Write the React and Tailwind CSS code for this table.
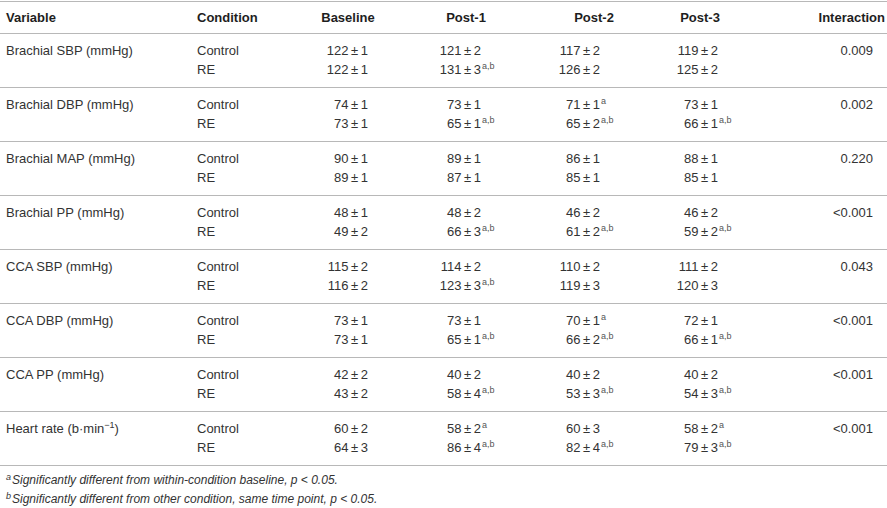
import React from 'react';

const rows = [
  {
    name: 'Brachial SBP (mmHg)',
    p: '0.009',
    control: [['122', '1'], ['121', '2'], ['117', '2'], ['119', '2']],
    re: [['122', '1'], ['131', '3', 'a,b'], ['126', '2'], ['125', '2']],
  },
  {
    name: 'Brachial DBP (mmHg)',
    p: '0.002',
    control: [['74', '1'], ['73', '1'], ['71', '1', 'a'], ['73', '1']],
    re: [['73', '1'], ['65', '1', 'a,b'], ['65', '2', 'a,b'], ['66', '1', 'a,b']],
  },
  {
    name: 'Brachial MAP (mmHg)',
    p: '0.220',
    control: [['90', '1'], ['89', '1'], ['86', '1'], ['88', '1']],
    re: [['89', '1'], ['87', '1'], ['85', '1'], ['85', '1']],
  },
  {
    name: 'Brachial PP (mmHg)',
    p: '<0.001',
    control: [['48', '1'], ['48', '2'], ['46', '2'], ['46', '2']],
    re: [['49', '2'], ['66', '3', 'a,b'], ['61', '2', 'a,b'], ['59', '2', 'a,b']],
  },
  {
    name: 'CCA SBP (mmHg)',
    p: '0.043',
    control: [['115', '2'], ['114', '2'], ['110', '2'], ['111', '2']],
    re: [['116', '2'], ['123', '3', 'a,b'], ['119', '3'], ['120', '3']],
  },
  {
    name: 'CCA DBP (mmHg)',
    p: '<0.001',
    control: [['73', '1'], ['73', '1'], ['70', '1', 'a'], ['72', '1']],
    re: [['73', '1'], ['65', '1', 'a,b'], ['66', '2', 'a,b'], ['66', '1', 'a,b']],
  },
  {
    name: 'CCA PP (mmHg)',
    p: '<0.001',
    control: [['42', '2'], ['40', '2'], ['40', '2'], ['40', '2']],
    re: [['43', '2'], ['58', '4', 'a,b'], ['53', '3', 'a,b'], ['54', '3', 'a,b']],
  },
  {
    name: 'heart',
    p: '<0.001',
    control: [['60', '2'], ['58', '2', 'a'], ['60', '3'], ['58', '2', 'a']],
    re: [['64', '3'], ['86', '4', 'a,b'], ['82', '4', 'a,b'], ['79', '3', 'a,b']],
  },
];

const grid = 'grid grid-cols-[191px_99px_116px_120px_136px_76px_1fr]';

// right edge of the value inside each time column
const valueBox = ['w-[78px]', 'w-[75px]', 'w-[74px]', 'w-[56px]'];

const Value = ({ v, i }) => (
  <div className="flex items-start">
    <span className={`${valueBox[i]} shrink-0 text-right`}>
      {v[0]}{'\u2009±\u2009'}{v[1]}
    </span>
    {v[2] && (
      <span className="text-[9px] leading-[12px] pl-[1px] text-[#555]">{v[2]}</span>
    )}
  </div>
);

const VarName = ({ name }) =>
  name === 'heart' ? (
    <span>
      Heart rate (b·min<span className="relative -top-[5px] text-[9px]">−1</span>)
    </span>
  ) : (
    <span>{name}</span>
  );

export default function App() {
  return (
    <div
      className="w-[887px] h-[508px] bg-white pt-[1px] text-[13px] text-[#333]"
      style={{ fontFamily: '"Liberation Sans", Arial, sans-serif' }}
    >
      {/* header */}
      <div className={`${grid} border-t border-b border-[#b8b8b8] py-[6px] leading-[19px] font-bold text-[#1e1e1e]`}>
        <div className="pl-[6px]">Variable</div>
        <div className="pl-[6px]">Condition</div>
        <div className="text-center">Baseline</div>
        <div className="text-center">Post-1</div>
        <div className="text-center">Post-2</div>
        <div className="text-center">Post-3</div>
        <div className="text-right pr-[2px]">Interaction</div>
      </div>

      {rows.map((r) => (
        <div
          key={r.name}
          className={`${grid} border-b border-[#b8b8b8] pt-[7px] pb-[8px] leading-[19px]`}
        >
          <div className="pl-[6px]">
            <VarName name={r.name} />
          </div>
          <div className="pl-[6px] flex flex-col">
            <span>Control</span>
            <span>RE</span>
          </div>
          {r.control.map((c, i) => (
            <div key={i} className="flex flex-col">
              <Value v={c} i={i} />
              <Value v={r.re[i]} i={i} />
            </div>
          ))}
          <div className="text-right pr-[14px]">{r.p}</div>
        </div>
      ))}

      {/* footnotes */}
      <div className="pt-[5px] pl-[6px] text-[12px] leading-[18px] italic text-[#333]">
        <p>
          <span className="relative -top-[4px] text-[9px] pr-[1px]">a</span>Significantly different from within-condition baseline, p {'<'} 0.05.
        </p>
        <p>
          <span className="relative -top-[4px] text-[9px] pr-[1px]">b</span>Significantly different from other condition, same time point, p {'<'} 0.05.
        </p>
      </div>
    </div>
  );
}
